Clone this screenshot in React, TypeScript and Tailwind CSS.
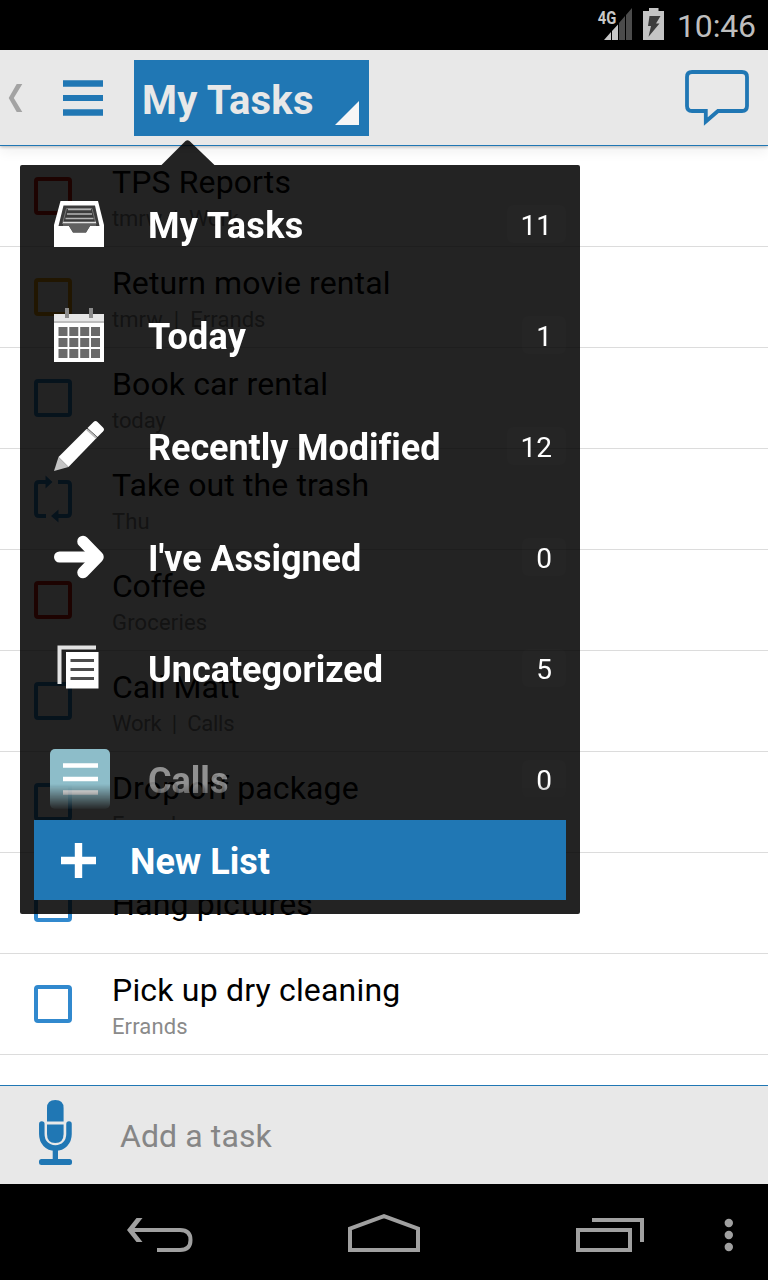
import React from 'react';

type Task = { title: string; meta?: string; box: string; repeat?: boolean; titleTrack?: string; metaTrack?: string };

const tasks: Task[] = [
  { title: 'TPS Reports', meta: 'tmrw  |  Work', box: 'border-[#d01c0c]', metaTrack: 'tracking-[-0.1px]' },
  { title: 'Return movie rental', meta: 'tmrw  |  Errands', box: 'border-[#eba10c]', metaTrack: 'tracking-[0.05px]' },
  { title: 'Book car rental', meta: 'today', box: 'border-[#3189ce]', metaTrack: 'tracking-[-0.1px]' },
  { title: 'Take out the trash', meta: 'Thu', box: '', repeat: true },
  { title: 'Coffee', meta: 'Groceries', box: 'border-[#d01c0c]', titleTrack: 'tracking-[-0.25px]', metaTrack: 'tracking-[0.18px]' },
  { title: 'Call Matt', meta: 'Work  |  Calls', box: 'border-[#3189ce]', titleTrack: 'tracking-[-0.03px]', metaTrack: 'tracking-[-0.26px]' },
  { title: 'Drop off package', meta: 'Errands', box: 'border-[#3189ce]' },
  { title: 'Hang pictures', box: 'border-[#3189ce]', titleTrack: 'tracking-[0.2px]' },
  { title: 'Pick up dry cleaning', meta: 'Errands', box: 'border-[#3189ce]', titleTrack: 'tracking-[0.19px]' },
];

function StatusBar() {
  return (
    <div className="flex h-[50px] shrink-0 items-start justify-end bg-black pr-[12px]">
      <svg className="mt-[6px]" width="36" height="36" viewBox="597 6 36 36">
        <path d="M604 40L611 32V40Z M612 31L618 24.5V40H612Z" fill="#c8c8c8" />
        <path d="M619 23L625 16V40H619Z M626 15L632 8V40H626Z" fill="#4b4b4b" />
        <text
          transform="translate(597.8 23.6) scale(0.8 1)"
          fontFamily="Roboto, sans-serif"
          fontSize="18.5"
          fontWeight="700"
          fill="#c8c8c8"
        >
          4G
        </text>
      </svg>
      <svg className="ml-[10px] mt-[8px]" width="21" height="32" viewBox="643 8 21 32">
        <path d="M643 11H649V8H658.500V11H664V40H643Z" fill="#c4c4c4" />
        <path d="M649.500 16H660.500L656 23.500H659.500L648.500 36.700L651 26H648Z" fill="#3c3c3c" />
      </svg>
      <div className="ml-[13px] mt-[6px] w-[79px] whitespace-nowrap text-[32px] leading-[40px] tracking-[-0.15px] text-[#bebebe]">
        10:46
      </div>
    </div>
  );
}

function Header() {
  return (
    <header className="relative z-10 flex h-[96px] shrink-0 items-start border-b border-[#2077b4] bg-[#e8e8e8] shadow-[0_1px_3px_rgba(0,0,0,0.25),0_6px_12px_rgba(0,0,0,0.06)]">
      <svg className="ml-[8px] mt-[34px]" width="15" height="28" viewBox="8 84 15 28">
        <path d="M16.700 84H22.300L13.800 98L22.300 112H16.700L8.700 98Z" fill="#a3a3a3" />
      </svg>
      <svg className="ml-[40px] mt-[30px]" width="40" height="36" viewBox="0 0 40 36">
        <path d="M0 0.300H40V6.800H0Z M0 15H40V21H0Z M0 29.200H40V35.700H0Z" fill="#2077b4" />
      </svg>
      <div className="ml-[31px] mt-[10px] flex h-[76px] w-[235px] items-start justify-between bg-[#2077b4] pl-[8px] pr-[10px]">
        <span className="pt-[17px] text-[40px] font-bold leading-[48px] tracking-[0.25px] text-[#e8e8e8]">My Tasks</span>
        <svg className="mt-[41px]" width="24" height="24" viewBox="0 0 24 24">
          <path d="M24 0V24H0Z" fill="#f6f6f6" />
        </svg>
      </div>
      <svg className="ml-auto mr-[18px] mt-[18px]" width="66" height="60" viewBox="684 68 66 60">
        <path
          d="M692 72H742Q747 72 747 77V106Q747 111 742 111H718L705.800 121.500V111H692Q687 111 687 106V77Q687 72 692 72Z"
          fill="none"
          stroke="#2077b4"
          strokeWidth="3.800"
        />
      </svg>
    </header>
  );
}

function TaskRow({ task }: { task: Task }) {
  return (
    <div className="flex h-[101px] shrink-0 items-start border-b border-[#dcdcdc] pl-[34px]">
      {task.repeat ? (
        <svg className="mt-[24px] shrink-0" width="38" height="52" viewBox="34 473 38 52">
          <path
            d="M46 482H39Q36 482 36 485V513Q36 516 39 516H46 M58 482H67Q70 482 70 485V513Q70 516 67 516H58"
            fill="none"
            stroke="#3189ce"
            strokeWidth="4"
          />
          <path d="M45.500 475.500L52.500 482L45.500 488.500Z M58.500 509.500L51 516L58.500 522.500Z" fill="#3189ce" />
        </svg>
      ) : (
        <div className={`mt-[31px] size-[38px] shrink-0 rounded-[4px] border-4 ${task.box}`} />
      )}
      <div className={task.meta ? 'ml-[40px] pt-[16px]' : 'ml-[40px] pt-[31px]'}>
        <div className={`text-[32px] leading-[40px] text-black ${task.titleTrack ?? 'tracking-[0.12px]'}`}>{task.title}</div>
        {task.meta && (
          <div className={`mt-[3px] whitespace-pre text-[22px] leading-[28px] text-[#8a8a8a] ${task.metaTrack ?? 'tracking-[0.12px]'}`}>
            {task.meta}
          </div>
        )}
      </div>
    </div>
  );
}

function TrayIcon() {
  return (
    <svg className="size-[60px]" viewBox="0 0 60 60">
      <path d="M10.500 7H48L54 31V53H4V31Z" fill="#fff" />
      <path d="M13.500 11.500H45L49.500 32H40L36 38.500H23L19 32H8.500Z" fill="#3c3c3c" />
      <path d="M12.500 30L16.500 14.500H42L46 30" fill="none" stroke="#777" strokeWidth="1" />
      <path d="M18 15.500H41 M17 20H42 M15.500 24.500H43.500" stroke="#b4b4b4" strokeWidth="1.500" />
      <path d="M13 29H46V32H40L36 38.500H23L19 32H13Z" fill="#606060" />
      <path d="M13 28.500H46" stroke="#e0e0e0" strokeWidth="1.500" />
    </svg>
  );
}

function CalendarIcon() {
  return (
    <svg className="size-[60px]" viewBox="0 0 60 60">
      <path d="M4 9H54V57H4Z" fill="#fff" />
      <path d="M4 9H54V16H4Z" fill="#e6e6e6" />
      <path d="M4 16H54V18H4Z" fill="#bdbdbd" />
      <path d="M15 3H19V13H15Z M39 3H43V13H39Z" fill="#8c8c8c" />
      {[22, 33, 44].map((y) =>
        [8.5, 19.3, 30.2, 41].map((x) => <rect key={`${x}-${y}`} x={x} y={y} width="9" height="9" fill="#6a6a6a" />),
      )}
    </svg>
  );
}

function PencilIcon() {
  return (
    <svg className="size-[60px]" viewBox="0 0 60 60">
      <path d="M36.500 13L46.500 22L18.500 51L8.500 41Z" fill="#fff" />
      <path d="M37.500 12L43.500 6Q45.500 4 47.500 6L53 11.500Q55 13.500 53 15.500L47.500 21Z" fill="#fff" />
      <path d="M37 13.500L46.500 22" stroke="#bdbdbd" strokeWidth="2" />
      <path d="M8.500 41L18.500 51L4 55Z" fill="#c4c4c4" />
    </svg>
  );
}

function ArrowIcon() {
  return (
    <svg className="size-[60px]" viewBox="0 0 60 60">
      <path d="M9.500 30H42" stroke="#fff" strokeWidth="11" strokeLinecap="round" />
      <path d="M33 14.500L48 30L33 45.500" fill="none" stroke="#fff" strokeWidth="11.500" strokeLinecap="round" strokeLinejoin="round" />
    </svg>
  );
}

function PagesIcon() {
  return (
    <svg className="size-[60px]" viewBox="0 0 60 60">
      <path d="M9.500 46V9.500H46" fill="none" stroke="#e2e2e2" strokeWidth="4" />
      <path d="M16 14H48.500V50.500H16Z" fill="#fff" />
      <path d="M20.500 22.500H44 M20.500 31.500H44 M20.500 40.500H44" stroke="#4c4c4c" strokeWidth="2.800" />
    </svg>
  );
}

function CallsIcon() {
  return (
    <svg className="size-[60px]" viewBox="0 0 60 60">
      <rect width="60" height="60" rx="5" fill="#8dbdc9" />
      <path d="M13 16.500H48 M13 30H48 M13 43.500H48" stroke="#fff" strokeWidth="4.500" />
    </svg>
  );
}

const lists = [
  { name: 'My Tasks', count: 11, Icon: TrayIcon, tone: 'text-white tracking-[0.35px]' },
  { name: 'Today', count: 1, Icon: CalendarIcon, tone: 'text-white tracking-[0.2px]' },
  { name: 'Recently Modified', count: 12, Icon: PencilIcon, tone: 'text-white tracking-[-0.06px]' },
  { name: "I've Assigned", count: 0, Icon: ArrowIcon, tone: 'text-white tracking-[-0.05px]' },
  { name: 'Uncategorized', count: 5, Icon: PagesIcon, tone: 'text-white' },
  { name: 'Calls', count: 0, Icon: CallsIcon, tone: 'text-white/50' },
];

function ListMenu() {
  return (
    <div className="absolute left-[20px] top-[140px] z-20 flex w-[560px] flex-col">
      <svg className="ml-[140px] block" width="56" height="25" viewBox="160 140 56 25">
        <path d="M161 165.500L185.500 141Q187.500 139.500 189.500 141L215 165.500Z" fill="#000" fillOpacity="0.863" />
      </svg>
      <div className="flex h-[749px] flex-col rounded-[2px] bg-black/[0.863] pb-[14px]">
        <div className="h-[645px] overflow-hidden pt-[5px] [mask-image:linear-gradient(to_bottom,black_619px,transparent_645px)]">
          {lists.map(({ name, count, Icon, tone }) => (
            <div key={name} className="flex h-[111px] items-start pl-[30px] pr-[14px] pt-[24px]">
              <Icon />
              <span className={`ml-[38px] mt-[8px] text-[36px] font-bold leading-[48px] ${tone}`}>{name}</span>
              <span className="ml-auto mt-[11px] h-[38px] rounded-[6px] bg-white/[0.01] px-[14px] pt-[2px] text-[28px] leading-[38px] text-white">
                {count}
              </span>
            </div>
          ))}
        </div>
        <div className="mx-[14px] mt-auto flex h-[80px] shrink-0 items-center bg-[#2077b4] pl-[27px]">
          <svg width="35" height="35" viewBox="0 0 35 35">
            <path d="M13.800 0H21.200V13.800H35V21.200H21.200V35H13.800V21.200H0V13.800H13.800Z" fill="#fff" />
          </svg>
          <span className="ml-[34px] mt-[3px] text-[36px] font-bold leading-[48px] text-white">New List</span>
        </div>
      </div>
    </div>
  );
}

function AddTaskBar() {
  return (
    <div className="flex h-[99px] shrink-0 items-start border-t border-[#2077b4] bg-[#e8e8e8] pl-[38px]">
      <svg className="mt-[13px]" width="35" height="67" viewBox="38 1099 35 67">
        <path d="M47 1121.500V1108Q47 1100 55.300 1100T63.600 1108V1121.500Z" fill="#2077b4" />
        <path d="M47 1124.500H63.600V1134Q63.600 1143 55.300 1143T47 1134Z" fill="#2077b4" />
        <path
          d="M41.800 1124V1134C41.800 1142 47 1148 55.300 1148S69 1142 69 1134V1124"
          fill="none"
          stroke="#2077b4"
          strokeWidth="5.500"
          strokeLinecap="round"
        />
        <path d="M52.700 1149H58V1160H52.700Z" fill="#2077b4" />
        <rect x="39" y="1159" width="33" height="6" rx="2.500" fill="#2077b4" />
      </svg>
      <span className="ml-[47px] mt-[30px] text-[32px] leading-[40px] tracking-[0.1px] text-[#868686]">Add a task</span>
    </div>
  );
}

function NavBar() {
  return (
    <nav className="flex h-[96px] shrink-0 items-start bg-black pl-[126px] pt-[29px]">
      <svg width="68" height="40" viewBox="126 1213 68 40">
        <path d="M136.500 1218H142.500L133 1230L142.500 1242H136.500L127 1230Z" fill="#a0a0a0" />
        <path d="M131 1230H180C187 1230 190.500 1233.500 190.500 1240S187 1250 180 1250H157" fill="none" stroke="#a0a0a0" strokeWidth="4" />
      </svg>
      <svg className="ml-[153px]" width="74" height="40" viewBox="347 1213 74 40">
        <path d="M350 1250V1228.700L384 1216.200L418 1228.700V1250Z" fill="none" stroke="#a0a0a0" strokeWidth="4" />
      </svg>
      <svg className="ml-[154px]" width="70" height="40" viewBox="575 1213 70 40">
        <path d="M578 1230H630V1250H578Z M592 1220H642V1242" fill="none" stroke="#a0a0a0" strokeWidth="4" />
      </svg>
      <svg className="ml-[78px]" width="12" height="40" viewBox="723 1213 12 40">
        <circle cx="728.8" cy="1223" r="4.200" fill="#a0a0a0" />
        <circle cx="728.8" cy="1235" r="4.200" fill="#a0a0a0" />
        <circle cx="728.8" cy="1247" r="4.200" fill="#a0a0a0" />
      </svg>
    </nav>
  );
}

export default function App() {
  return (
    <div className="relative flex h-[1280px] w-[768px] flex-col overflow-hidden bg-white font-[Roboto,sans-serif]">
      <StatusBar />
      <Header />
      <main className="flex min-h-0 flex-1 flex-col overflow-hidden">
        {tasks.map((task) => (
          <TaskRow key={task.title} task={task} />
        ))}
      </main>
      <AddTaskBar />
      <NavBar />
      <ListMenu />
    </div>
  );
}
